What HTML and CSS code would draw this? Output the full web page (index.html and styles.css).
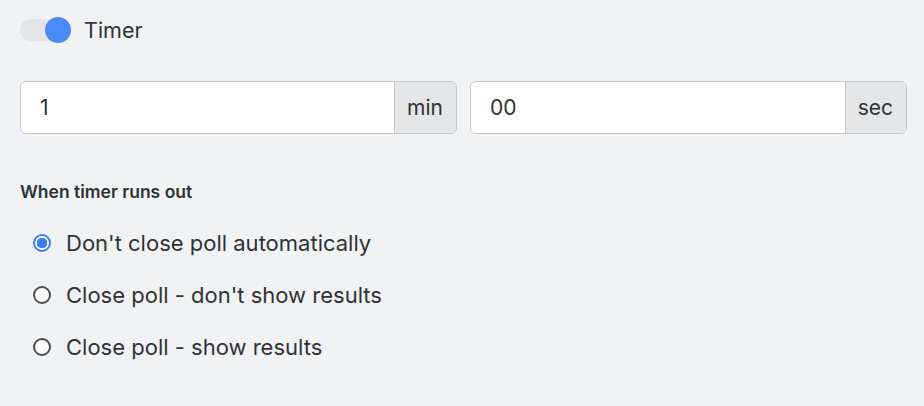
FILE: index.html
```html
<!DOCTYPE html>
<html lang="en">
<head>
  <meta charset="UTF-8" />
  <title>Poll Timer</title>
  <link rel="stylesheet" href="styles.css">
</head>
<body>
  <div class="timer-panel">
    <label class="toggle-row">
      <span class="switch"><span class="knob"></span></span>
      <span class="toggle-label">Timer</span>
    </label>

    <div class="time-inputs">
      <div class="input-group">
        <input type="text" value="1">
        <span class="addon">min</span>
      </div>
      <div class="input-group">
        <input type="text" value="00">
        <span class="addon">sec</span>
      </div>
    </div>

    <h4 class="section-title">When timer runs out</h4>

    <div class="options">
      <label class="option">
        <input type="radio" name="runout" checked>
        <span>Don't close poll automatically</span>
      </label>
      <label class="option">
        <input type="radio" name="runout">
        <span>Close poll - don't show results</span>
      </label>
      <label class="option">
        <input type="radio" name="runout">
        <span>Close poll - show results</span>
      </label>
    </div>
  </div>
</body>
</html>
```

FILE: styles.css
```css
body {
  margin: 0;
  background: #f1f2f4;
  font-family: Inter, "Noto Sans", sans-serif;
  color: #2f3237;
}

.timer-panel {
  padding: 17px 17px 0 20px;
}

.toggle-row {
  display: flex;
  align-items: center;
  gap: 14px;
  height: 26px;
}

.switch {
  position: relative;
  width: 50px;
  height: 22px;
  border-radius: 11px;
  background: #e4e5e8;
}

.knob {
  position: absolute;
  right: -1px;
  top: -2px;
  width: 26px;
  height: 26px;
  border-radius: 50%;
  background: #4a8af4;
}

.toggle-label {
  font-size: 21.5px;
  line-height: 24px;
}

.time-inputs {
  display: flex;
  gap: 13px;
  margin-top: 38px;
}

.input-group {
  flex: 1;
  display: flex;
  height: 53px;
  border: 1px solid #c3c7cc;
  border-radius: 6px;
  overflow: hidden;
  box-sizing: border-box;
}

.input-group input {
  flex: 1;
  min-width: 0;
  border: none;
  outline: none;
  padding: 0 19px;
  font-family: inherit;
  font-size: 21px;
  color: #2f3237;
  background: #fff;
}

.addon {
  display: flex;
  align-items: center;
  padding: 0 13px 0 12px;
  border-left: 1px solid #c3c7cc;
  background: #e4e5e7;
  font-size: 21px;
  color: #2f3237;
}

.section-title {
  margin: 48px 0 0;
  font-size: 17.5px;
  font-weight: 600;
  line-height: 20px;
}

.options {
  margin-top: 15px;
}

.option {
  display: flex;
  align-items: center;
  gap: 15px;
  height: 52px;
  padding-left: 13px;
  font-size: 22px;
}

.option input {
  appearance: none;
  margin: 0;
  width: 18px;
  height: 18px;
  border: 2px solid #4a4d52;
  border-radius: 50%;
  background: #fff;
  box-sizing: border-box;
}

.option input:checked {
  border-color: #3b7ff3;
  background: radial-gradient(circle, #3b7ff3 0 5px, #fff 5.5px);
}
```
